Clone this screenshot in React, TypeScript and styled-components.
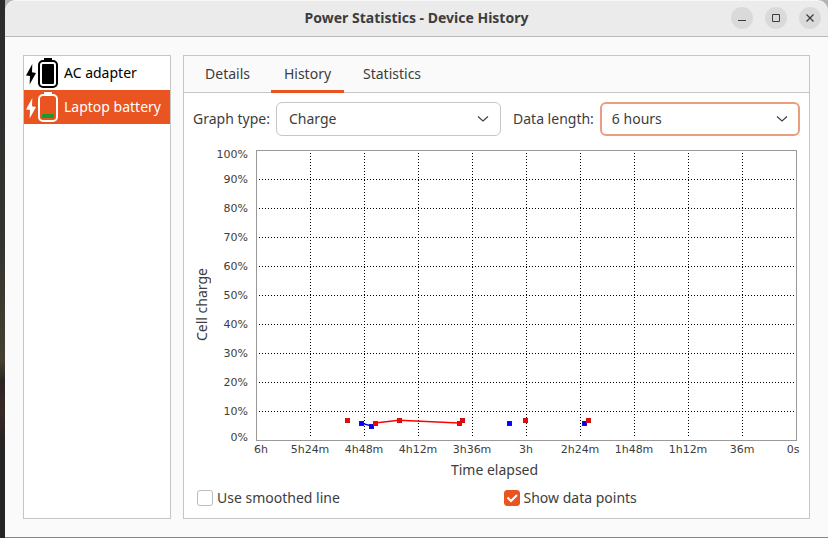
import React, { useState } from "react";
import styled, { createGlobalStyle } from "styled-components";

const GlobalStyle = createGlobalStyle`
  *, *::before, *::after { box-sizing: border-box; }
  body { margin: 0; }
  button, select, input { font: inherit; color: inherit; margin: 0; }
`;

const Desktop = styled.div`
  display: flex;
  min-height: 100vh;
  padding-left: 5px;
  background: linear-gradient(#2b2b2b 0, #33332f 45%, #45402f 67%, #2b2523 71%, #382a26 76%, #262524 82% 100%);
  font-family: "Noto Sans", "Open Sans", sans-serif;
  font-size: 14px;
  line-height: 20px;
  color: #3d3d3d;
`;

const Window = styled.main`
  flex: 1;
  min-width: 0;
  display: flex;
  flex-direction: column;
  background: #b4b4b4;
  border-bottom: 1px solid #858585;
`;

const TitleBar = styled.header`
  display: grid;
  grid-template-columns: 1fr auto 1fr;
  align-items: center;
  height: 37px;
  padding: 0 7px 1px;
  background: #ebebeb;
  border-top: 1px solid #f7f7f7;
  border-bottom: 1px solid #bababa;
  border-radius: 11px 11px 0 0;
`;

const Title = styled.h1`
  grid-column: 2;
  margin: 0;
  font-size: 14px;
  line-height: 20px;
  font-weight: 700;
`;

const WindowButtons = styled.div`
  display: flex;
  justify-content: flex-end;
  gap: 12px;
`;

const WindowButton = styled.button`
  display: grid;
  place-items: center;
  width: 22px;
  height: 22px;
  padding: 0;
  border: 0;
  border-radius: 50%;
  background: #dadada;
`;

const Body = styled.div`
  flex: 1;
  display: grid;
  grid-template-columns: 148px minmax(0, 1fr);
  gap: 12px;
  padding: 18px;
  background: #fafafa;
`;

const DeviceList = styled.nav`
  background: #fff;
  border: 1px solid #c6c6c6;
`;

const DeviceRow = styled.button<{ $selected: boolean }>`
  display: flex;
  align-items: center;
  gap: 5px;
  width: 100%;
  height: 34px;
  padding: 0 0 0 2px;
  border: 0;
  white-space: nowrap;
  text-align: left;
  background: ${(p) => (p.$selected ? "#e95420" : "#fff")};
  color: ${(p) => (p.$selected ? "#fff" : "#000")};
`;

const Panel = styled.section`
  display: flex;
  flex-direction: column;
  background: #fff;
  border: 1px solid #c6c6c6;
`;

const TabBar = styled.div`
  display: flex;
  gap: 7px;
  height: 37px;
  padding-left: 7px;
  background: #fafafa;
  box-shadow: inset 0 -1px #c6c6c6;
`;

const Tab = styled.button<{ $active: boolean }>`
  padding: 2px 12px 0;
  min-width: 73px;
  border: 0;
  border-bottom: 3px solid ${(p) => (p.$active ? "#e95420" : "transparent")};
  background: none;
`;

const TabContent = styled.div`
  flex: 1;
  display: flex;
  flex-direction: column;
  padding: 9px 9px 7px;
`;

const Filters = styled.div`
  display: flex;
  gap: 12px;
`;

const Field = styled.div<{ $grow: number }>`
  flex: ${(p) => p.$grow} 1 0;
  display: flex;
  align-items: center;
  gap: 6px;
`;

const FieldLabel = styled.label`
  white-space: nowrap;
`;

const SelectBox = styled.div`
  flex: 1;
  min-width: 0;
  display: grid;
  align-items: center;
  & > * { grid-area: 1 / 1; }
  & > svg { justify-self: end; margin-right: 12px; pointer-events: none; }
`;

const Select = styled.select<{ $highlighted?: boolean }>`
  appearance: none;
  width: 100%;
  height: 34px;
  padding: 0 34px 0 ${(p) => (p.$highlighted ? "10px" : "12px")};
  border: ${(p) => (p.$highlighted ? "2px solid #eb9d80" : "1px solid #c6c6c6")};
  border-radius: 6px;
  outline: none;
  background: #fff;
`;

const Chart = styled.figure`
  flex: 1;
  display: grid;
  grid-template-columns: 18px 45px minmax(0, 1fr);
  grid-template-rows: minmax(200px, 1fr) 18px 24px;
  margin: 14px 4px 0 0;
`;

const VerticalCaption = styled.span`
  grid-area: 1 / 1 / 3 / 2;
  justify-self: center;
  align-self: center;
  writing-mode: vertical-rl;
  rotate: 180deg;
`;

const HorizontalCaption = styled.span`
  grid-area: 3 / 1 / 4 / 4;
  justify-self: center;
  align-self: center;
`;

const Plot = styled.svg`
  grid-area: 1 / 3 / 2 / 4;
  width: 100%;
  height: 100%;
  overflow: visible;
  font-family: "DejaVu Sans", sans-serif;
  font-size: 11px;
  fill: #3d3d3d;
`;

const Options = styled.div`
  display: grid;
  grid-template-columns: 1fr 1fr;
  gap: 10px;
  padding: 5px 0 2px 4px;
`;

const Option = styled.label`
  display: flex;
  align-items: center;
  gap: 4px;
  height: 22px;
`;

const CheckBox = styled.span`
  display: grid;
  & > * { grid-area: 1 / 1; }
  & > svg { pointer-events: none; }
`;

const CheckInput = styled.input`
  appearance: none;
  width: 16px;
  height: 16px;
  border: 1px solid #bcbcbc;
  border-radius: 3px;
  background: #fff;
  &:checked { background: #e95420; border-color: #e95420; }
`;

function BatteryIcon({ color, fill, level }: { color: string; fill: string; level: number }) {
  return (
    <svg width="33" height="32" viewBox="0 0 33 32" aria-hidden="true">
      <path d="M6.3 7 L0 18.5 L4 19 L3.6 27.5 L10 16 L6 15.3 Z" fill={color} />
      <path d="M18 1h8v3h-8z" fill={color} />
      <rect x="13" y="4" width="18" height="26" rx="4" fill="none" stroke={color} strokeWidth="2" />
      <rect x="16" y={27 - level} width="12" height={level} rx="1" fill={fill} />
    </svg>
  );
}

const Chevron = () => (
  <svg width="12" height="8" viewBox="0 0 12 8" aria-hidden="true">
    <path d="M1 1.5 L6 6 L11 1.5" fill="none" stroke="#3d3d3d" strokeWidth="1.1" />
  </svg>
);

type Sample = { at: number; value: number; kind: "charging" | "discharging" };

const RED = "#ff0000";
const BLUE = "#0000ff";

/* Each run is joined by a line; "at" counts minutes from the left edge of a six hour span. */
const runs: Sample[][] = [
  [{ at: 60.5, value: 7, kind: "charging" }],
  [
    { at: 70, value: 6, kind: "discharging" },
    { at: 76.5, value: 5, kind: "discharging" },
  ],
  [
    { at: 79, value: 6, kind: "charging" },
    { at: 95, value: 7, kind: "charging" },
    { at: 135, value: 6, kind: "charging" },
    { at: 137, value: 7, kind: "charging" },
  ],
  [{ at: 168.5, value: 6, kind: "discharging" }],
  [{ at: 179, value: 7, kind: "charging" }],
  [{ at: 218.5, value: 6, kind: "discharging" }],
  [{ at: 221, value: 7, kind: "charging" }],
];

const timeTicks = ["6h", "5h24m", "4h48m", "4h12m", "3h36m", "3h", "2h24m", "1h48m", "1h12m", "36m", "0s"];
const px = (s: Sample) => `${(s.at / 360) * 100}%`;
const py = (s: Sample) => `${100 - s.value}%`;
const ink = (s: Sample) => (s.kind === "charging" ? RED : BLUE);

function HistoryPlot({ showPoints }: { showPoints: boolean }) {
  const inner = Array.from({ length: 9 }, (_, i) => (i + 1) * 10);
  return (
    <Plot role="img" aria-label="Cell charge over time elapsed">
      <g transform="translate(.5 .5)">
        <g stroke="#000" strokeDasharray="1 2" strokeDashoffset=".5" shapeRendering="crispEdges">
          {inner.map((p) => (
            <line key={`v${p}`} x1={`${p}%`} x2={`${p}%`} y1="0" y2="100%" />
          ))}
          {inner.map((p) => (
            <line key={`h${p}`} y1={`${p}%`} y2={`${p}%`} x1="0" x2="100%" />
          ))}
        </g>
        <rect width="100%" height="100%" fill="none" stroke="#fff" strokeWidth="5" shapeRendering="crispEdges" />
        <rect width="100%" height="100%" fill="none" stroke="#999" shapeRendering="crispEdges" />
        {runs.map((run) =>
          run.slice(1).map((s, i) => (
            <line key={s.at} x1={px(run[i])} y1={py(run[i])} x2={px(s)} y2={py(s)} stroke={ink(s)} strokeWidth="1.5" />
          )),
        )}
        {showPoints &&
          runs.flat().map((s) => (
            <svg key={s.at} x={px(s)} y={py(s)} overflow="visible">
              <rect x="-2" y="-2" width="4" height="4" fill={ink(s)} stroke={s.kind === "charging" ? "#c81414" : "#1414c8"} shapeRendering="crispEdges" />
            </svg>
          ))}
      </g>
      {timeTicks.map((t, i) => (
        <svg key={t} x={`${i * 10}%`} y="100%" overflow="visible">
          <text x={i === 0 ? 5 : i === 10 ? -3 : 0} y="13" textAnchor="middle">{t}</text>
        </svg>
      ))}
      {timeTicks.map((t, i) => (
        <svg key={t} y={`${i * 10}%`} overflow="visible">
          <text x="-8" y={i === 0 ? 8 : i === 10 ? 1 : 4} textAnchor="end">{100 - i * 10}%</text>
        </svg>
      ))}
    </Plot>
  );
}

const devices = [
  { name: "AC adapter", level: 20, fill: "#000" },
  { name: "Laptop battery", level: 4, fill: "#189c28" },
];

export default function App() {
  const [device, setDevice] = useState(1);
  const [tab, setTab] = useState("History");
  const [smooth, setSmooth] = useState(false);
  const [points, setPoints] = useState(true);

  return (
    <Desktop>
      <GlobalStyle />
      <Window>
        <TitleBar>
          <Title>Power Statistics - Device History</Title>
          <WindowButtons>
            <WindowButton aria-label="Minimize">
              <svg width="10" height="10" viewBox="0 0 10 10"><path d="M1 7.5h8" stroke="#3d3d3d" /></svg>
            </WindowButton>
            <WindowButton aria-label="Maximize">
              <svg width="8" height="8" viewBox="0 0 8 8"><path d="M.5.5h7v7h-7z" fill="none" stroke="#3d3d3d" /></svg>
            </WindowButton>
            <WindowButton aria-label="Close">
              <svg width="8" height="8" viewBox="0 0 8 8"><path d="M.5.5l7 7M7.5.5l-7 7" stroke="#3d3d3d" strokeWidth="1.3" /></svg>
            </WindowButton>
          </WindowButtons>
        </TitleBar>
        <Body>
          <DeviceList aria-label="Devices">
            {devices.map((d, i) => (
              <DeviceRow key={d.name} $selected={i === device} onClick={() => setDevice(i)}>
                <BatteryIcon color={i === device ? "#fff" : "#000"} fill={d.fill} level={d.level} />
                {d.name}
              </DeviceRow>
            ))}
          </DeviceList>
          <Panel>
            <TabBar role="tablist">
              {["Details", "History", "Statistics"].map((t) => (
                <Tab key={t} role="tab" aria-selected={t === tab} $active={t === tab} onClick={() => setTab(t)}>
                  {t}
                </Tab>
              ))}
            </TabBar>
            <TabContent>
              <Filters>
                <Field $grow={308}>
                  <FieldLabel htmlFor="graph-type">Graph type:</FieldLabel>
                  <SelectBox>
                    <Select id="graph-type" defaultValue="Charge">
                      <option>Charge</option>
                      <option>Rate</option>
                    </Select>
                    <Chevron />
                  </SelectBox>
                </Field>
                <Field $grow={287}>
                  <FieldLabel htmlFor="data-length">Data length:</FieldLabel>
                  <SelectBox>
                    <Select id="data-length" defaultValue="6 hours" $highlighted>
                      <option>6 hours</option>
                      <option>1 day</option>
                    </Select>
                    <Chevron />
                  </SelectBox>
                </Field>
              </Filters>
              <Chart>
                <VerticalCaption>Cell charge</VerticalCaption>
                <HistoryPlot showPoints={points} />
                <HorizontalCaption>Time elapsed</HorizontalCaption>
              </Chart>
              <Options>
                <Option>
                  <CheckBox>
                    <CheckInput type="checkbox" checked={smooth} onChange={() => setSmooth(!smooth)} />
                  </CheckBox>
                  Use smoothed line
                </Option>
                <Option>
                  <CheckBox>
                    <CheckInput type="checkbox" checked={points} onChange={() => setPoints(!points)} />
                    {points && (
                      <svg width="16" height="16" viewBox="0 0 16 16" aria-hidden="true">
                        <path d="M3.5 7.5l3.5 3.5 6-6" fill="none" stroke="#fff" strokeWidth="2" />
                      </svg>
                    )}
                  </CheckBox>
                  Show data points
                </Option>
              </Options>
            </TabContent>
          </Panel>
        </Body>
      </Window>
    </Desktop>
  );
}
